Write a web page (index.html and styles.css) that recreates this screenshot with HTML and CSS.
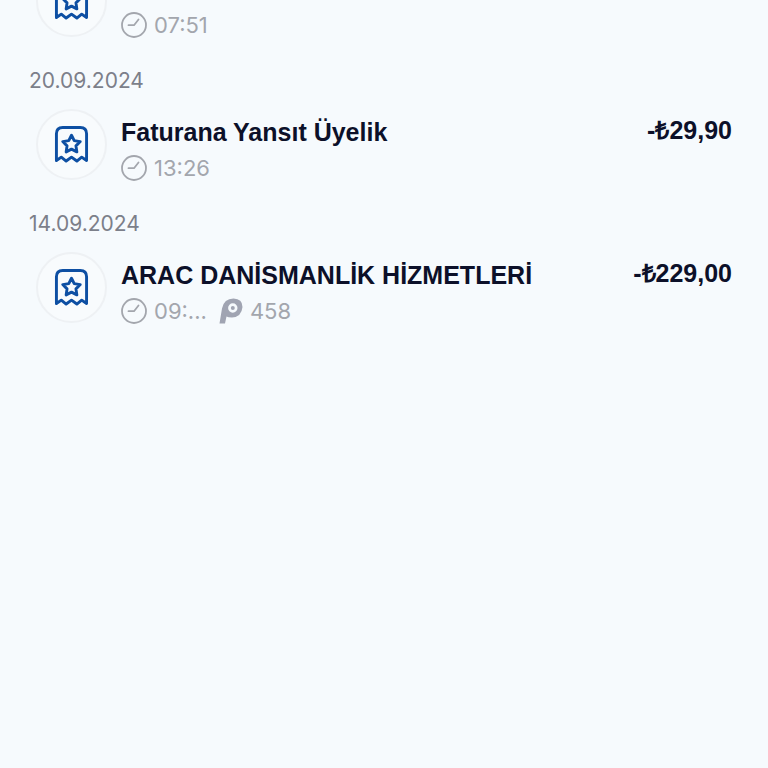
FILE: index.html
```html
<!DOCTYPE html>
<html lang="tr">

<head>
    <meta charset="UTF-8">
    <meta name="viewport" content="width=device-width, initial-scale=1.0">
    <title>Hesap Hareketleri</title>
    <link rel="stylesheet" href="styles.css">
</head>

<body>
    <!-- shared icons -->
    <svg class="sprite" aria-hidden="true">
        <symbol id="receipt" viewBox="0 0 36 40">
            <path d="M2.500 36.500V9Q2.500 2.500 9 2.500H27Q33.500 2.500 33.500 9V36.500L28.500 33L23.500 37L18 33L12.500 37L7.500 33Z" />
            <path d="M18 10.500L20.800 16L27 17L22.600 21.400L23.500 27.600L18 24.800L12.500 27.600L13.400 21.400L9 17L15.200 16Z" />
        </symbol>
        <symbol id="clock" viewBox="0 0 26 26">
            <circle cx="13" cy="13" r="12" />
            <path d="M7.500 13.200H13L17.500 7.500" />
        </symbol>
        <symbol id="points" viewBox="0 0 24 26">
            <path fill-rule="evenodd" d="M0.500 25.500L3 10.500Q5 0.500 14.500 0.500Q23.500 0.800 23.500 9Q22.500 19 13 19.500Q9 19.500 7.500 18.500L6 25.500ZM13.800 5.300A4.700 4.700 0 1 0 13.800 14.700A4.700 4.700 0 1 0 13.800 5.300Z" />
            <circle cx="13.800" cy="10" r="2" />
        </symbol>
    </svg>

    <main class="history">
        <article class="row">
            <div class="badge"><svg class="receipt"><use href="#receipt" /></svg></div>
            <div class="info">
                <h3 class="title"></h3>
                <div class="meta">
                    <svg class="clock"><use href="#clock" /></svg>
                    <time>07:51</time>
                </div>
            </div>
        </article>

        <h2 class="date">20.09.2024</h2>
        <article class="row">
            <div class="badge"><svg class="receipt"><use href="#receipt" /></svg></div>
            <div class="info">
                <h3 class="title">Faturana Yansıt Üyelik</h3>
                <div class="meta">
                    <svg class="clock"><use href="#clock" /></svg>
                    <time>13:26</time>
                </div>
            </div>
            <p class="amount">-₺29,90</p>
        </article>

        <h2 class="date">14.09.2024</h2>
        <article class="row">
            <div class="badge"><svg class="receipt"><use href="#receipt" /></svg></div>
            <div class="info">
                <h3 class="title">ARAC DANİSMANLİK HİZMETLERİ</h3>
                <div class="meta">
                    <svg class="clock"><use href="#clock" /></svg>
                    <time>09:...</time>
                    <svg class="points"><use href="#points" /></svg>
                    <span>458</span>
                </div>
            </div>
            <p class="amount">-₺229,00</p>
        </article>
    </main>
</body>

</html>
```

FILE: styles.css
```css
body {
    margin: 0;
    background-color: #f6fafd;
    font-family: Inter, "Liberation Sans", sans-serif;
}

.sprite {
    display: none;
}

/* the list is scrolled, so its first row starts above the window */
.history {
    margin-top: -34px;
    padding: 0 36px 0 29px;
}

.date {
    margin: 0;
    padding: 28px 0 14px;
    font-size: 21px;
    font-weight: 400;
    line-height: 28px;
    color: #7c7f8a;
}

.row {
    display: flex;
    align-items: flex-start;
    padding-left: 7px;
}

.badge {
    display: flex;
    flex: none;
    align-items: center;
    justify-content: center;
    box-sizing: border-box;
    width: 71px;
    height: 71px;
    border: 2px solid #eef1f4;
    border-radius: 50%;
    background-color: #f8fbfd;
}

.receipt {
    width: 35px;
    height: 39px;
    fill: none;
    stroke: #0d4fa3;
    stroke-width: 3;
    stroke-linejoin: round;
}

.info {
    flex: 1;
    min-width: 0;
    padding: 7px 0 0 14px;
}

.title,
.amount {
    margin: 0;
    font-family: "Liberation Sans", Arial, sans-serif;
    font-size: 25px;
    font-weight: 700;
    line-height: 32px;
    color: #0c1029;
}

.title {
    min-height: 32px;
}

.amount {
    padding-top: 5px;
}

.meta {
    display: flex;
    align-items: center;
    gap: 7px;
    margin-top: 6px;
    font-size: 22px;
    line-height: 28px;
    color: #a3a6ad;
}

.clock {
    width: 26px;
    height: 26px;
    fill: none;
    stroke: #a3a6ad;
    stroke-width: 1.8;
    stroke-linecap: round;
    stroke-linejoin: round;
}

.points {
    width: 24px;
    height: 26px;
    margin-left: 5px;
    fill: #a0a4b2;
}
```
